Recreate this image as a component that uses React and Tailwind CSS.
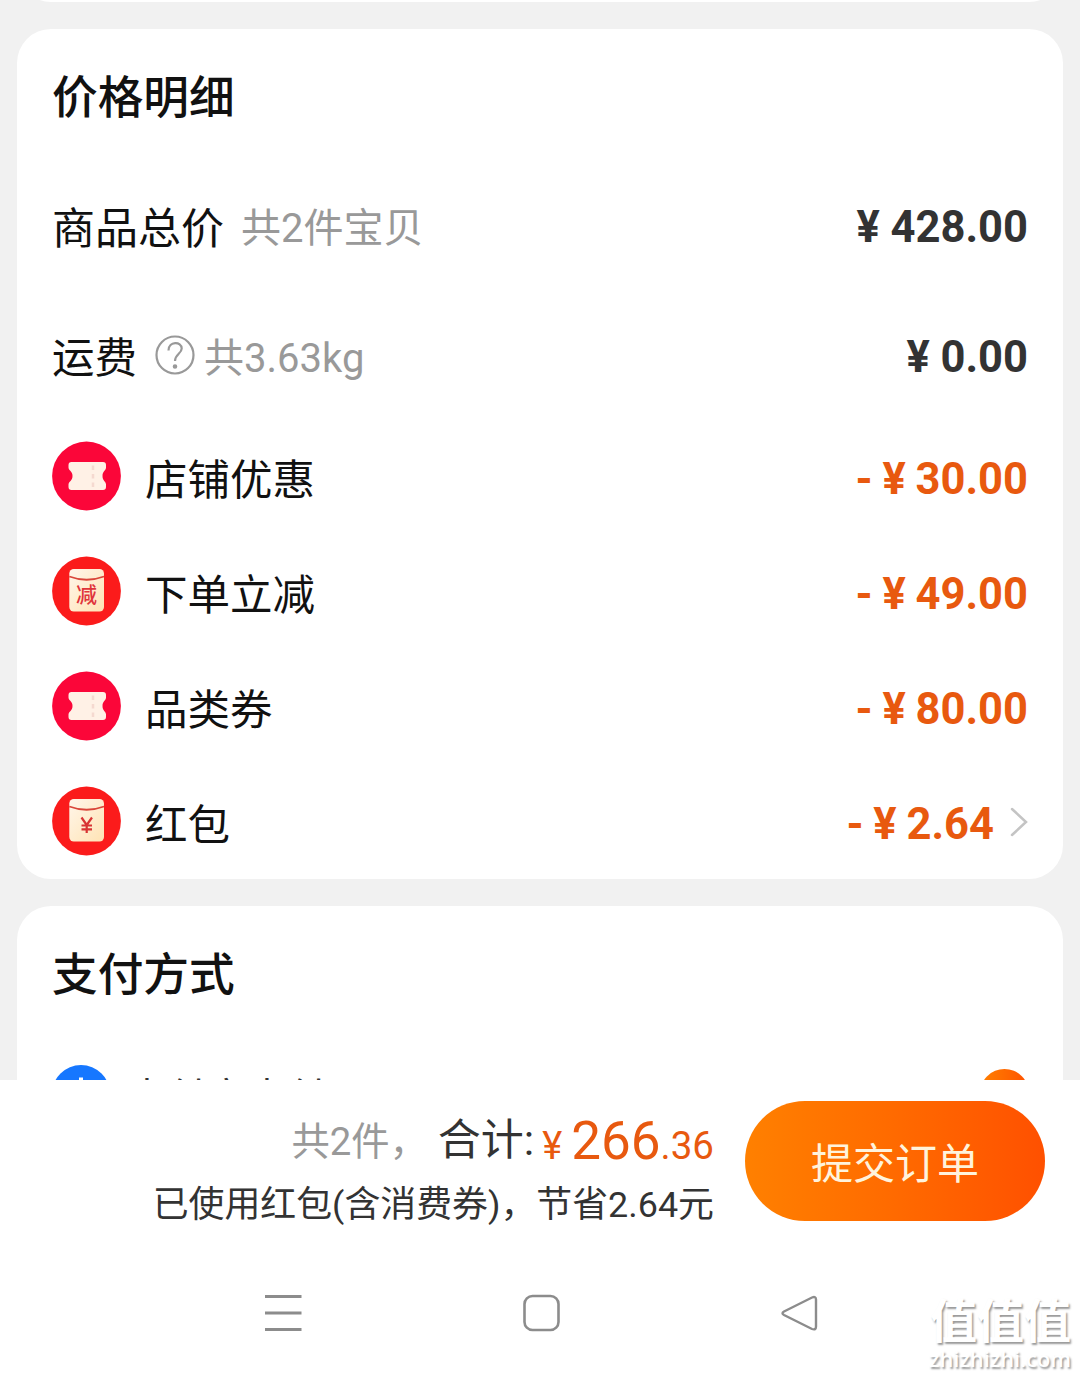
import React from "react";

const discounts = [
  { id: 1, name: "店铺优惠", amount: "30.00", icon: "ticket" },
  { id: 2, name: "下单立减", amount: "49.00", icon: "packet", mark: "减" },
  { id: 3, name: "品类券", amount: "80.00", icon: "ticket" },
  { id: 4, name: "红包", amount: "2.64", icon: "packet", mark: "¥", link: true },
];

const TicketIcon = () => (
  <svg className="mb-[7px] size-[70px] shrink-0" viewBox="0 0 70 70">
    <circle cx="34.5" cy="35" r="34.4" fill="#fb0639" />
    <path
      d="M19.500 21h31.500a3 3 0 0 1 3 3v2.500c0 3-3.500 3.500-3.500 8.500s3.500 5.500 3.500 8.500V46a3 3 0 0 1-3 3h-31.500a3 3 0 0 1-3-3v-2.500c0-3 4-3.500 4-8.500s-4-5.500-4-8.500V24a3 3 0 0 1 3-3z"
      fill="#fff1e6"
    />
    <path d="M41 24.500v22" stroke="#f5d9d0" strokeWidth="2.500" strokeDasharray="4.500 4" />
  </svg>
);

const PacketIcon = ({ mark }) => (
  <svg className="mb-[7px] size-[70px] shrink-0" viewBox="0 0 70 70">
    <defs>
      <linearGradient id="packet" x1="0" y1="0" x2="1" y2="1">
        <stop offset="0" stopColor="#fff6ea" />
        <stop offset="1" stopColor="#ffe3b4" />
      </linearGradient>
    </defs>
    <circle cx="34.5" cy="35" r="34.4" fill="#fb1b1b" />
    <rect x="17.300" y="13" width="34.700" height="42.500" rx="4.500" fill="url(#packet)" />
    <path d="M17.300 20.500q17.300 6.500 34.700 0" fill="none" stroke="#d9463a" strokeWidth="1.800" />
    {mark === "¥" ? (
      <path
        d="M29.500 31.500l5.200 7.500L40 31.500M34.700 39v8M29.500 39.500h10.500M29.500 43.300h10.500"
        fill="none"
        stroke="#d83434"
        strokeWidth="2.200"
      />
    ) : (
      <text x="34.5" y="46" textAnchor="middle" fontSize="21" fontWeight="500" fill="#e0343a">
        {mark}
      </text>
    )}
  </svg>
);

const DiscountRow = ({ name, amount, icon, mark, link }) => (
  <div className="flex h-[115px] items-center">
    {icon === "ticket" ? <TicketIcon /> : <PacketIcon mark={mark} />}
    <span className="ml-[23px] pt-[4px] text-[42.5px] text-[#111]">{name}</span>
    <span className="ml-auto text-[43.500px] font-bold text-[#e8590f] [word-spacing:-1px]">
      - ¥ {amount}
    </span>
    {link && (
      <svg className="mb-[6px] ml-[15px] h-[32px] w-[19px]" viewBox="0 0 19 32" fill="none">
        <path d="M3 3l14 13L3 29" stroke="#c4c4c4" strokeWidth="2.500" strokeLinecap="round" />
      </svg>
    )}
  </div>
);

const App = () => {
  return (
    <div className="flex h-[1378px] w-[1080px] flex-col overflow-hidden bg-white font-['Roboto','Noto_Sans_CJK_SC',sans-serif] leading-none whitespace-nowrap">
      <main className="h-[1080px] overflow-hidden bg-[#f1f1f1] px-[17px]">
        <div className="-mt-[78px] h-20 rounded-b-[34px] bg-white" />

        <section className="mt-[27px] h-[850px] rounded-[34px] bg-white px-[35px]">
          <h2 className="flex h-[133px] items-center pt-[6px] text-[45.700px] font-medium text-[#111]">价格明细</h2>
          <div className="flex h-[130px] items-center">
            <span className="pt-[4px] text-[43px] text-[#111]">商品总价</span>
            <span className="ml-[17px] pt-[3px] text-[40px] text-[#999]">共2件宝贝</span>
            <span className="ml-auto pt-[1px] text-[43.500px] font-bold text-[#333]">¥ 428.00</span>
          </div>
          <div className="flex h-[130px] items-center">
            <span className="pt-[5px] text-[42.5px] text-[#111]">运费</span>
            <svg className="mb-[5px] ml-[18px] size-10" viewBox="0 0 40 40" fill="none" stroke="#999" strokeWidth="2.200">
              <circle cx="20" cy="20" r="18.500" />
              <path d="M13.500 15.500c0-9.500 13.200-9.300 13.200-2 0 5.200-6.700 5.500-6.700 12.500" />
              <circle cx="20" cy="31.500" r="1.200" fill="#999" />
            </svg>
            <span className="ml-[9px] pt-[3px] text-[40px] text-[#999]">共3.63kg</span>
            <span className="ml-auto pt-[1px] text-[43.500px] font-bold text-[#333]">¥ 0.00</span>
          </div>
          {discounts.map((item) => (
            <DiscountRow key={item.id} {...item} />
          ))}
        </section>

        <section className="mt-[27px] h-[400px] rounded-t-[34px] bg-white px-[35px]">
          <h2 className="flex h-[133px] items-center pt-[6px] text-[45.700px] font-medium text-[#111]">支付方式</h2>
          <div className="mt-[25px] flex h-[60px] items-center">
            <svg className="size-[58px]" viewBox="0 0 58 58">
              <circle cx="29" cy="29" r="29" fill="#1677ff" />
              <path d="M29 12.500v12M14 21h30M18 29h22" stroke="#fff" strokeWidth="4" />
            </svg>
            <span className="ml-[17px] pt-[9px] text-[40px] text-[#333]">支付宝支付</span>
            <span className="-mr-[1px] mb-[2px] ml-auto size-[49px] rounded-full bg-linear-to-r from-[#ff8000] to-[#ff5000]" />
          </div>
        </section>
      </main>

      <footer className="flex h-[168px] pt-[21px] pr-[35px]">
        <div className="ml-auto flex flex-col items-end">
          <div className="flex h-[68px]">
            <div className="flex items-baseline pt-[18px]">
              <span className="text-[38.300px] text-[#999]">共2件，</span>
              <span className="ml-[10px] text-[43px] text-[#333]">合计:</span>
            </div>
            <div className="ml-[8px] flex items-baseline pt-[14px] text-[#e8590f]">
              <span className="text-[38px]">¥</span>
              <span className="ml-[9px] text-[53px]">266</span>
              <span className="text-[38.500px]">.36</span>
            </div>
          </div>
          <p className="text-[35.900px] leading-[73px] text-[#333]">已使用红包(含消费券)，节省2.64元</p>
        </div>
        <button className="ml-[31px] h-[120px] w-[300px] rounded-full bg-linear-to-r from-[#ff8000] to-[#ff5000] pt-[8px] text-[42px] text-[#fff3dc]">
          提交订单
        </button>
      </footer>

      <nav className="flex h-[130px] pt-[46px] pl-[264px]">
        <svg className="size-[38px]" viewBox="0 0 38 38" stroke="#8c8c8c" strokeWidth="3">
          <path d="M1 2.500h36.500M1 19h36.500M1 35.500h36.500" />
        </svg>
        <svg className="ml-[220px] size-[38px]" viewBox="0 0 38 38" fill="none" stroke="#8c8c8c" strokeWidth="2.600">
          <rect x="2.500" y="2" width="34" height="34" rx="8" />
        </svg>
        <svg className="ml-[221px] size-[38px]" viewBox="0 0 38 38" fill="none" stroke="#8c8c8c" strokeWidth="2.400">
          <path d="M3 17.500L31 3.500q4-1.500 4 2v27q0 4-4 2.500L3 21q-3-1.700 0-3.500z" />
        </svg>
        <div className="ml-auto flex flex-col items-end pr-[9px] text-white [text-shadow:1.5px_1.5px_2px_#999]">
          <span className="pt-[4px] text-[47px] font-bold">值值值</span>
          <span className="mt-[3px] font-['Open_Sans'] text-[21.800px] font-semibold">zhizhizhi.com</span>
        </div>
      </nav>
    </div>
  );
};

export default App;
